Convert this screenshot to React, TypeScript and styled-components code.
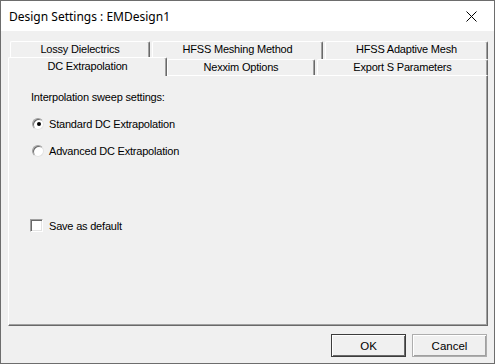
import * as React from "react";
import styled, { createGlobalStyle } from "styled-components";

const Global = createGlobalStyle`
  html, body { margin: 0; padding: 0; background: #f0f0f0; }
  * { box-sizing: border-box; }
`;

const Window = styled.div`
  width: 495px;
  height: 364px;
  border: 1px solid #6d6d6d;
  background: #f0f0f0;
  display: flex;
  flex-direction: column;
  font-family: "Liberation Sans", Arial, sans-serif;
  font-size: 11px;
  letter-spacing: -0.2px;
  color: #000;
`;

const TitleBar = styled.div`
  height: 30px;
  background: #fff;
  display: flex;
  align-items: center;
  justify-content: space-between;
  padding: 0 17px 0 8px;
  font-family: "Noto Sans", "Liberation Sans", sans-serif;
  font-size: 12px;
  letter-spacing: 0;
`;

const Body = styled.div`
  flex: 1;
  padding: 10px 6px 0 7px;
  display: flex;
  flex-direction: column;
`;

const TabRow = styled.div<{ $front?: boolean }>`
  display: flex;
  gap: 2px;
  padding-left: 2px;
  height: ${(p) => (p.$front ? 16 : 18)}px;
  align-items: flex-end;
`;

const Tab = styled.div<{ $w: number; $selected?: boolean; $h: number }>`
  position: relative;
  z-index: ${(p) => (p.$selected ? 2 : 1)};
  width: ${(p) => (p.$selected ? p.$w + 4 : p.$w)}px;
  height: ${(p) => p.$h}px;
  margin: ${(p) => (p.$selected ? "0 -2px -1px -2px" : "0")};
  background: #f0f0f0;
  border-top: 1px solid #fff;
  border-left: 1px solid #fff;
  border-right: 1px solid #696969;
  box-shadow: inset -1px 0 #a0a0a0;
  border-top-left-radius: 2px;
  border-top-right-radius: 2px;
  display: flex;
  justify-content: center;
  padding-top: ${(p) => (p.$selected ? 2 : 1)}px;
  white-space: nowrap;
`;

const Panel = styled.div`
  height: 251px;
  width: 480px;
  border-top: 1px solid #fff;
  border-left: 1px solid #fff;
  border-right: 1px solid #696969;
  border-bottom: 1px solid #696969;
  box-shadow: inset -1px -1px #a0a0a0;
  padding: 15px 0 0 22px;
  display: flex;
  flex-direction: column;
`;

const Label = styled.div`
  height: 13px;
  line-height: 13px;
`;

const OptionRow = styled.div<{ $top: number }>`
  display: flex;
  align-items: center;
  gap: 5px;
  height: 13px;
  margin-top: ${(p) => p.$top}px;
  padding-left: 1px;
`;

const Radio = styled.span<{ $checked?: boolean }>`
  width: 12px;
  height: 12px;
  border-radius: 50%;
  background: #fff;
  border: 1px solid;
  border-color: #a0a0a0 #e3e3e3 #e3e3e3 #a0a0a0;
  box-shadow: inset 1px 1px #696969;
  display: flex;
  align-items: center;
  justify-content: center;
  &::after {
    content: "";
    display: ${(p) => (p.$checked ? "block" : "none")};
    width: 4px;
    height: 4px;
    border-radius: 50%;
    background: #000;
    margin: 1px 0 0 1px;
  }
`;

const Check = styled.span`
  width: 13px;
  height: 13px;
  margin-left: -2px;
  margin-right: 1px;
  background: #fff;
  border: 1px solid;
  border-color: #a0a0a0 #fff #fff #a0a0a0;
  box-shadow: inset 1px 1px #696969, inset -1px -1px #e3e3e3;
`;

const ButtonBar = styled.div`
  display: flex;
  justify-content: flex-end;
  gap: 6px;
  margin-top: 8px;
  padding-right: 1px;
`;

const Button = styled.div<{ $default?: boolean }>`
  width: 75px;
  height: 23px;
  display: flex;
  align-items: center;
  justify-content: center;
  background: #f0f0f0;
  font-size: 11.5px;
  letter-spacing: 0;
  border: 1px solid ${(p) => (p.$default ? "#3c3c3c" : "#adadad")};
  box-shadow: ${(p) =>
    p.$default
      ? "inset 1px 1px #fff, inset -1px -1px #696969"
      : "inset 1px 1px #fff, inset -1px -1px #a0a0a0"};
`;

function CloseIcon() {
  return (
    <svg width="11" height="11" viewBox="0 0 11 11">
      <path d="M0.5 0.5 L10.5 10.5 M10.5 0.5 L0.5 10.5" stroke="#000" strokeWidth="1" />
    </svg>
  );
}

export default function App() {
  return (
    <Window>
      <Global />
      <TitleBar>
        <span>Design Settings : EMDesign1</span>
        <CloseIcon />
      </TitleBar>
      <Body>
        <TabRow>
          <Tab $w={140} $h={18}>Lossy Dielectrics</Tab>
          <Tab $w={171} $h={18}>HFSS Meshing Method</Tab>
          <Tab $w={163} $h={18}>HFSS Adaptive Mesh</Tab>
        </TabRow>
        <TabRow $front>
          <Tab $w={155} $h={19} $selected>DC Extrapolation</Tab>
          <Tab $w={148} $h={16}>Nexxim Options</Tab>
          <Tab $w={171} $h={16}>Export S Parameters</Tab>
        </TabRow>
        <Panel>
          <Label>Interpolation sweep settings:</Label>
          <OptionRow $top={13}>
            <Radio $checked />
            <span>Standard DC Extrapolation</span>
          </OptionRow>
          <OptionRow $top={14}>
            <Radio />
            <span>Advanced DC Extrapolation</span>
          </OptionRow>
          <OptionRow $top={62}>
            <Check />
            <span>Save as default</span>
          </OptionRow>
        </Panel>
        <ButtonBar>
          <Button $default>OK</Button>
          <Button>Cancel</Button>
        </ButtonBar>
      </Body>
    </Window>
  );
}
